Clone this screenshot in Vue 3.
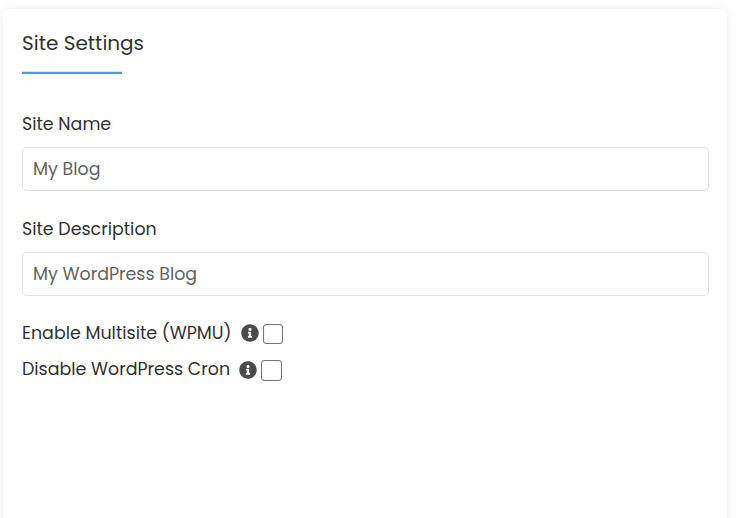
<script setup>
import { ref } from 'vue'

const fields = ref([
  { id: 'site-name', label: 'Site Name', value: 'My Blog' },
  { id: 'site-description', label: 'Site Description', value: 'My WordPress Blog' },
])

const options = ref([
  { id: 'multisite', label: 'Enable Multisite (WPMU)', checked: false },
  { id: 'cron', label: 'Disable WordPress Cron', checked: false },
])
</script>

<template>
  <main class="page">
    <section class="card">
      <h2 class="title">Site Settings</h2>
      <div class="rule"></div>
      <div v-for="f in fields" :key="f.id" class="field">
        <label class="label" :for="f.id">{{ f.label }}</label>
        <input :id="f.id" v-model="f.value" class="input" type="text" />
      </div>
      <div class="options">
        <div v-for="o in options" :key="o.id" class="option" :class="o.id">
          <label class="option-label" :for="o.id">{{ o.label }}</label>
          <svg class="info" viewBox="0 0 512 512" aria-hidden="true">
            <path fill="currentColor" d="M256 8C119 8 8 119 8 256s111 248 248 248 248-111 248-248S393 8 256 8zm0 102a44 44 0 1 1 0 88 44 44 0 0 1 0-88zm60 268a12 12 0 0 1-12 12h-96a12 12 0 0 1-12-12v-28a12 12 0 0 1 12-12h14v-66h-14a12 12 0 0 1-12-12v-26a12 12 0 0 1 12-12h70a12 12 0 0 1 12 12v104h14a12 12 0 0 1 12 12z" />
          </svg>
          <input :id="o.id" v-model="o.checked" class="check" type="checkbox" />
        </div>
      </div>
    </section>
  </main>
</template>

<style>
body {
  margin: 0;
  background: #fff;
}
</style>

<style scoped>
.page {
  box-sizing: border-box;
  height: 518px;
  padding: 9px 14px 0 3px;
  overflow: hidden;
  font-family: Poppins, Inter, "Liberation Sans", sans-serif;
  color: #313131;
}
.card {
  box-sizing: border-box;
  height: 560px;
  padding: 19px 18px 0 19px;
  border-radius: 6px;
  background: #fff;
  box-shadow: 0 0 12px rgba(0, 0, 0, 0.07);
}
.title {
  margin: 0;
  font-size: 20px;
  line-height: 30px;
  font-weight: 400;
  white-space: nowrap;
}
.rule {
  box-sizing: border-box;
  width: 100px;
  height: 3px;
  margin: 13px 0 37px;
  border-top: 1px solid #e3e4e4;
  background: #4398fb;
  background-clip: padding-box;
}
.field {
  margin-bottom: 25px;
}
.label {
  display: block;
  height: 26px;
  margin-bottom: 10px;
  font-size: 17.45px;
  line-height: 26px;
}
.input {
  display: block;
  box-sizing: border-box;
  width: 100%;
  height: 44px;
  margin: 0;
  padding: 0 10px;
  border: 1px solid #e3e3e3;
  border-radius: 5px;
  outline: none;
  background: #fff;
  color: #626262;
  font-family: inherit;
  font-size: 17.45px;
}
.options {
  margin-top: -5px;
}
.option {
  display: flex;
  align-items: flex-start;
  height: 36px;
}
.option-label {
  width: 219px;
  font-size: 17.45px;
  line-height: 34px;
  white-space: nowrap;
}
.cron .option-label {
  width: 217px;
}
.info {
  width: 18px;
  height: 18px;
  margin: 8px 4px 0 0;
  color: #4a4a4a;
}
.cron .info {
  margin-top: 9px;
}
.check {
  appearance: none;
  box-sizing: border-box;
  width: 20px;
  height: 20px;
  margin: 8px 0 0;
  border: 1px solid #767676;
  border-radius: 3px;
  background: #fff;
  box-shadow: inset 0 0 1px rgba(0, 0, 0, 0.35);
}
.cron .check {
  width: 21px;
  height: 21px;
}
</style>
